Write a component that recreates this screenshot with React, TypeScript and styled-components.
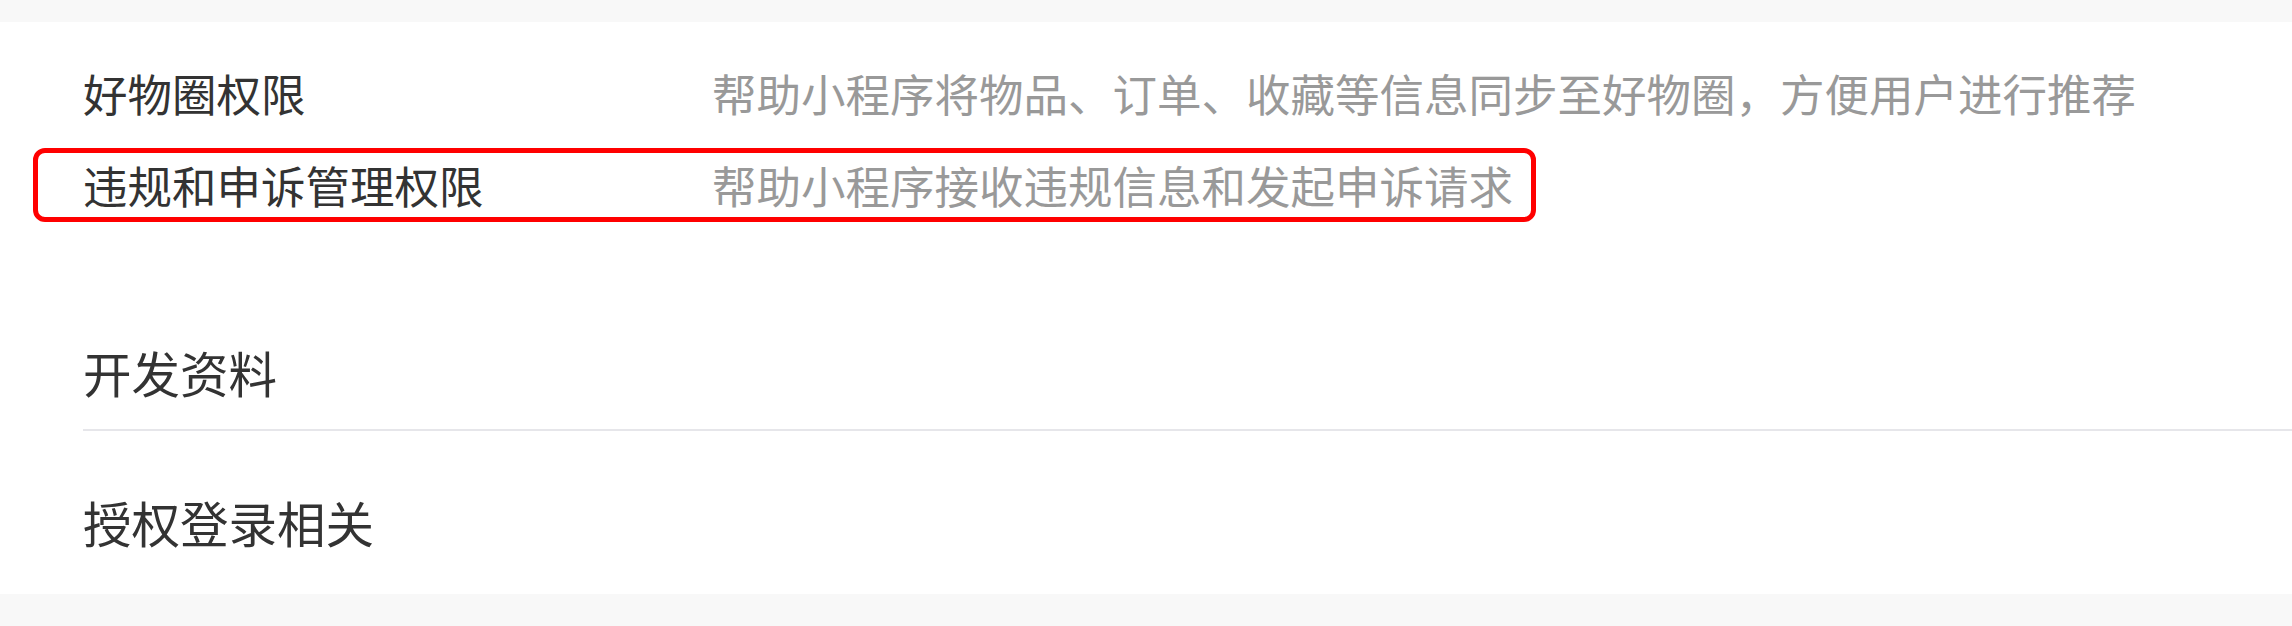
import React from 'react'
import styled, { createGlobalStyle } from 'styled-components'

const GlobalStyle = createGlobalStyle`
  html, body {
    margin: 0;
    padding: 0;
    background: #f8f8f8;
  }
  body {
    font-family: "Noto Sans CJK SC", "Noto Sans", sans-serif;
    -webkit-font-smoothing: antialiased;
  }
`;

const Page = styled.div`
  padding: 22px 0 32px;
`;

const Panel = styled.div`
  background: #fff;
  height: 572px;
  box-sizing: border-box;
  padding: 34px 0 0 83px;
`;

const PermissionList = styled.div`
  display: flex;
  flex-flow: column nowrap;
  align-items: flex-start;
  gap: 18px;
`;

const PermissionRow = styled.div<{ $highlight?: boolean }>`
  display: grid;
  grid-template-columns: 629px auto;
  margin-left: -50px;
  padding: 0 18px 0 45px;
  border: 5px solid ${p => (p.$highlight ? '#ff0000' : 'transparent')};
  border-radius: 12px;
  line-height: 64px;
  font-size: 44.5px;
  white-space: nowrap;

  .name { color: #333; }
  .desc { color: #999; }
`;

const Sections = styled.div`
  margin-top: 59px;
`;

const SectionItem = styled.div<{ $divider?: boolean }>`
  padding: 61px 0 27px;
  line-height: 60px;
  font-size: 48.5px;
  color: #333;
  border-bottom: 2px solid ${p => (p.$divider ? '#e6e6ea' : 'transparent')};
`;

const permissions = [
  { name: '好物圈权限', desc: '帮助小程序将物品、订单、收藏等信息同步至好物圈，方便用户进行推荐' },
  { name: '违规和申诉管理权限', desc: '帮助小程序接收违规信息和发起申诉请求', highlight: true },
]

const sections = ['开发资料', '授权登录相关']

export default function App() {
  return (
    <Page>
      <GlobalStyle />
      <Panel>
        <PermissionList>
          {permissions.map(p => (
            <PermissionRow key={p.name} $highlight={p.highlight}>
              <span className="name">{p.name}</span>
              <span className="desc">{p.desc}</span>
            </PermissionRow>
          ))}
        </PermissionList>
        <Sections>
          {sections.map((s, i) => (
            <SectionItem key={s} $divider={i < sections.length - 1}>
              {s}
            </SectionItem>
          ))}
        </Sections>
      </Panel>
    </Page>
  )
}
